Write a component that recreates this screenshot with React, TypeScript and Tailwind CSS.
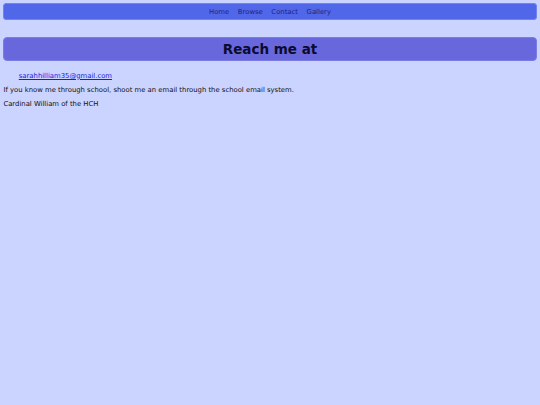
export default function App() {
  return (
    <div className="min-h-screen bg-[#cbd3ff] px-[3.4px] pt-[3.4px] font-['DejaVu_Sans',sans-serif] text-[6.85px] text-[#111]">
      <nav className="flex h-[16.2px] items-center justify-center gap-[8.6px] rounded-[3px] border border-[#7084f0] bg-[#5067e9] pt-[1px] text-[#23237a]">
        <a href="#">Home</a>
        <a href="#">Browse</a>
        <a href="#">Contact</a>
        <a href="#">Gallery</a>
      </nav>

      <h1 className="mt-[17.2px] flex h-[24.6px] items-center justify-center rounded-[4px] border border-[#7b7be4] bg-[#6868dc] text-[13.5px] font-bold text-[#0b0b2e]">
        Reach me at
      </h1>

      <ul className="mt-[9.4px] pl-[15.4px] leading-[10px]">
        <li>
          <a href="#" className="text-[#1a1ae0] underline">
            sarahhilliam35@gmail.com
          </a>
        </li>
      </ul>
      <p className="mt-[2.2px] leading-[14.5px]">
        If you know me through school, shoot me an email through the school email system.
      </p>
      <p className="leading-[14.5px]">Cardinal William of the HCH</p>
    </div>
  );
}
